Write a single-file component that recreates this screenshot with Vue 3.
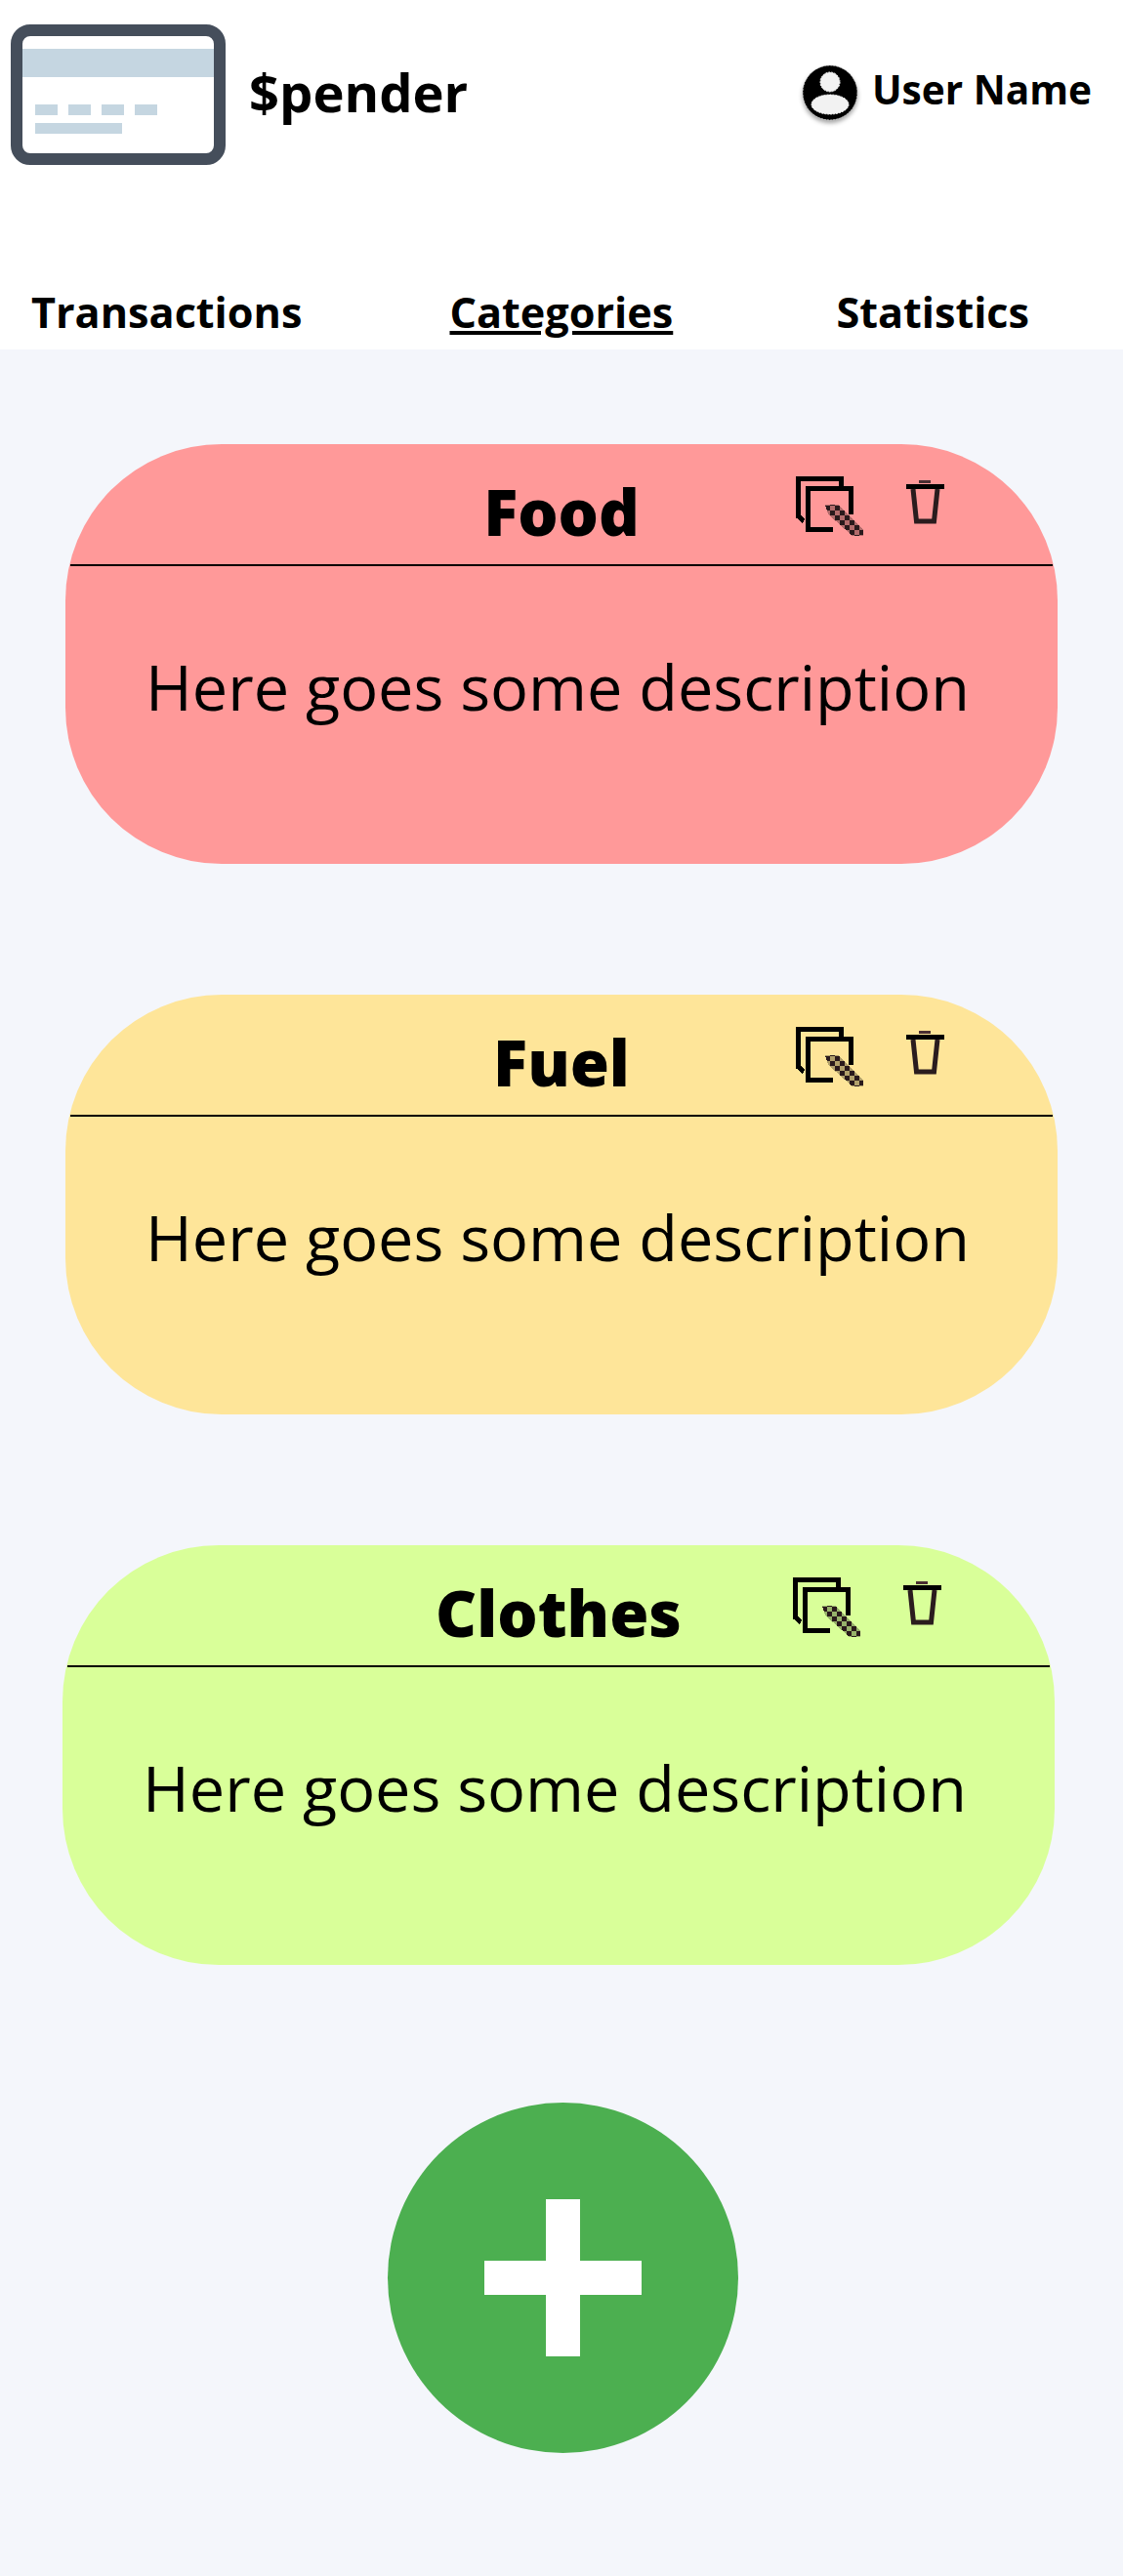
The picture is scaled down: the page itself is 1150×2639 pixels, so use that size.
<script setup>
const categories = [
  { name: 'Food', color: '#ff9999' },
  { name: 'Fuel', color: '#fee599' },
  { name: 'Clothes', color: '#d9ff99', shifted: true }
]
</script>

<template>
  <div class="page">
    <header class="header">
      <div class="top-row">
        <div class="brand">
          <svg class="logo" width="220" height="144" viewBox="0 0 220 144">
            <rect x="12" y="25" width="196" height="29" fill="#c5d6e1" />
            <rect x="25" y="82" width="23" height="11" fill="#c5d6e1" />
            <rect x="59" y="82" width="23" height="11" fill="#c5d6e1" />
            <rect x="93" y="82" width="23" height="11" fill="#c5d6e1" />
            <rect x="127" y="82" width="23" height="11" fill="#c5d6e1" />
            <rect x="25" y="101" width="89" height="11" fill="#c5d6e1" />
            <rect x="6" y="6" width="208" height="132" rx="14" fill="none" stroke="#454e5b" stroke-width="12" />
          </svg>
          <span class="brand-name">$pender</span>
        </div>
        <div class="user">
          <svg class="user-icon" width="58" height="62" viewBox="0 0 58 62">
            <circle cx="29" cy="29" r="28" fill="#000" stroke="#ccc" stroke-width="0.8" stroke-dasharray="2 1" />
            <circle cx="29" cy="18" r="10" fill="#f2f2f2" stroke="#fff" stroke-width="1" stroke-dasharray="2 1" />
            <ellipse cx="29" cy="41" rx="19" ry="10" fill="#f2f2f2" stroke="#fff" stroke-width="1" stroke-dasharray="2 1" />
          </svg>
          <span class="user-name">User Name</span>
        </div>
      </div>
      <nav class="nav">
        <a class="nav-link">Transactions</a>
        <a class="nav-link active">Categories</a>
        <a class="nav-link">Statistics</a>
      </nav>
    </header>

    <main class="content">
      <section
        v-for="category in categories"
        :key="category.name"
        class="card"
        :class="{ shifted: category.shifted }"
        :style="{ background: category.color }"
      >
        <div class="card-head">
          <h2 class="card-title">{{ category.name }}</h2>
          <div class="card-actions">
            <svg class="pixel" width="72" height="64" viewBox="0 0 72 64">
              <defs>
                <pattern :id="'check-' + category.name" width="10" height="10" patternUnits="userSpaceOnUse">
                  <rect width="10" height="10" fill="#000" fill-opacity="0.3" />
                  <rect width="5" height="5" fill="#2a1a1c" />
                  <rect x="5" y="5" width="5" height="5" fill="#2a1a1c" />
                </pattern>
              </defs>
              <path d="M8 46 L2.500 41 V2.500 H46 V10" fill="none" stroke="#000" stroke-width="5" />
              <path d="M38 54.500 H12.500 V12.500 H56.500 V39" fill="none" stroke="#000" stroke-width="5" />
              <path d="M30 29 H43 L69 54 V61 H58 L33 39 Z" :fill="'url(#check-' + category.name + ')'" />
            </svg>
            <svg class="trash" width="40" height="46" viewBox="0 0 40 46">
              <path d="M13 1.500 H25" stroke="#4a2f33" stroke-width="3" />
              <path d="M0 6.500 H39" stroke="#000" stroke-width="5" />
              <path d="M7 9 L10.500 42 H28.500 L32 9" fill="none" stroke="#2a1c1e" stroke-width="5" />
            </svg>
          </div>
        </div>
        <p class="card-text">Here goes some description</p>
      </section>

      <button class="add-btn" aria-label="Add category">
        <span class="plus"></span>
      </button>
    </main>
  </div>
</template>

<style>
body {
  background: #f4f6fb;
}
</style>

<style scoped>
.page {
  width: 1150px;
  height: 2639px;
  background: #f4f6fb;
  font-family: "Open Sans", "Liberation Sans", sans-serif;
  color: #000;
  overflow: hidden;
}

.header {
  background: #fff;
  height: 358px;
  display: flex;
  flex-direction: column;
}

.top-row {
  display: flex;
  justify-content: space-between;
  align-items: flex-start;
  height: 290px;
  padding: 25px 32px 0 11px;
  box-sizing: border-box;
}

.brand {
  display: flex;
  align-items: center;
  gap: 24px;
}

.brand-name {
  font-size: 54.3px;
  font-weight: 700;
  line-height: 1;
  margin-top: -5px;
}

.user {
  display: flex;
  align-items: center;
  gap: 14px;
  margin-top: 41px;
}

.user-icon {
  filter: drop-shadow(0 3px 2px rgba(0, 0, 0, 0.35));
}

.user-name {
  font-size: 40.6px;
  font-weight: 700;
  line-height: 1;
  margin-top: -10px;
}

.nav {
  display: flex;
  justify-content: space-between;
  padding: 0 96px 0 32px;
}

.nav-link {
  font-size: 43.2px;
  font-weight: 700;
  line-height: 60px;
}

.nav-link.active {
  text-decoration: underline;
  margin-right: 16px;
}

.content {
  padding-top: 97px;
  display: flex;
  flex-direction: column;
}

.card {
  width: 1016px;
  height: 430px;
  margin: 0 0 134px 67px;
  border-radius: 160px;
  box-sizing: border-box;
  padding: 0 5px;
}

.card.shifted {
  margin-left: 64px;
}

.card-head {
  position: relative;
  height: 125px;
  border-bottom: 2px solid #000;
  box-sizing: border-box;
  text-align: center;
}

.card-title {
  margin: 0;
  padding-top: 16px;
  font-size: 65px;
  font-weight: 800;
  line-height: 106px;
}

.card-actions {
  position: absolute;
  top: 33px;
  left: 743px;
  display: flex;
  align-items: flex-start;
  gap: 41px;
}

.pixel {
  shape-rendering: crispEdges;
}

.trash {
  margin-top: 4px;
}

.card-text {
  margin: 0;
  padding-right: 8px;
  padding-top: 78px;
  font-size: 64.8px;
  line-height: 90px;
  text-align: center;
}

.add-btn {
  width: 359px;
  height: 359px;
  border: none;
  border-radius: 50%;
  background: #4caf50;
  margin: 7px 0 0 397px;
  padding: 0;
  position: relative;
}

.plus {
  position: absolute;
  left: 99px;
  top: 99px;
  width: 161px;
  height: 161px;
  background:
    linear-gradient(#fff, #fff) center / 35px 161px no-repeat,
    linear-gradient(#fff, #fff) center / 161px 35px no-repeat;
}
</style>
